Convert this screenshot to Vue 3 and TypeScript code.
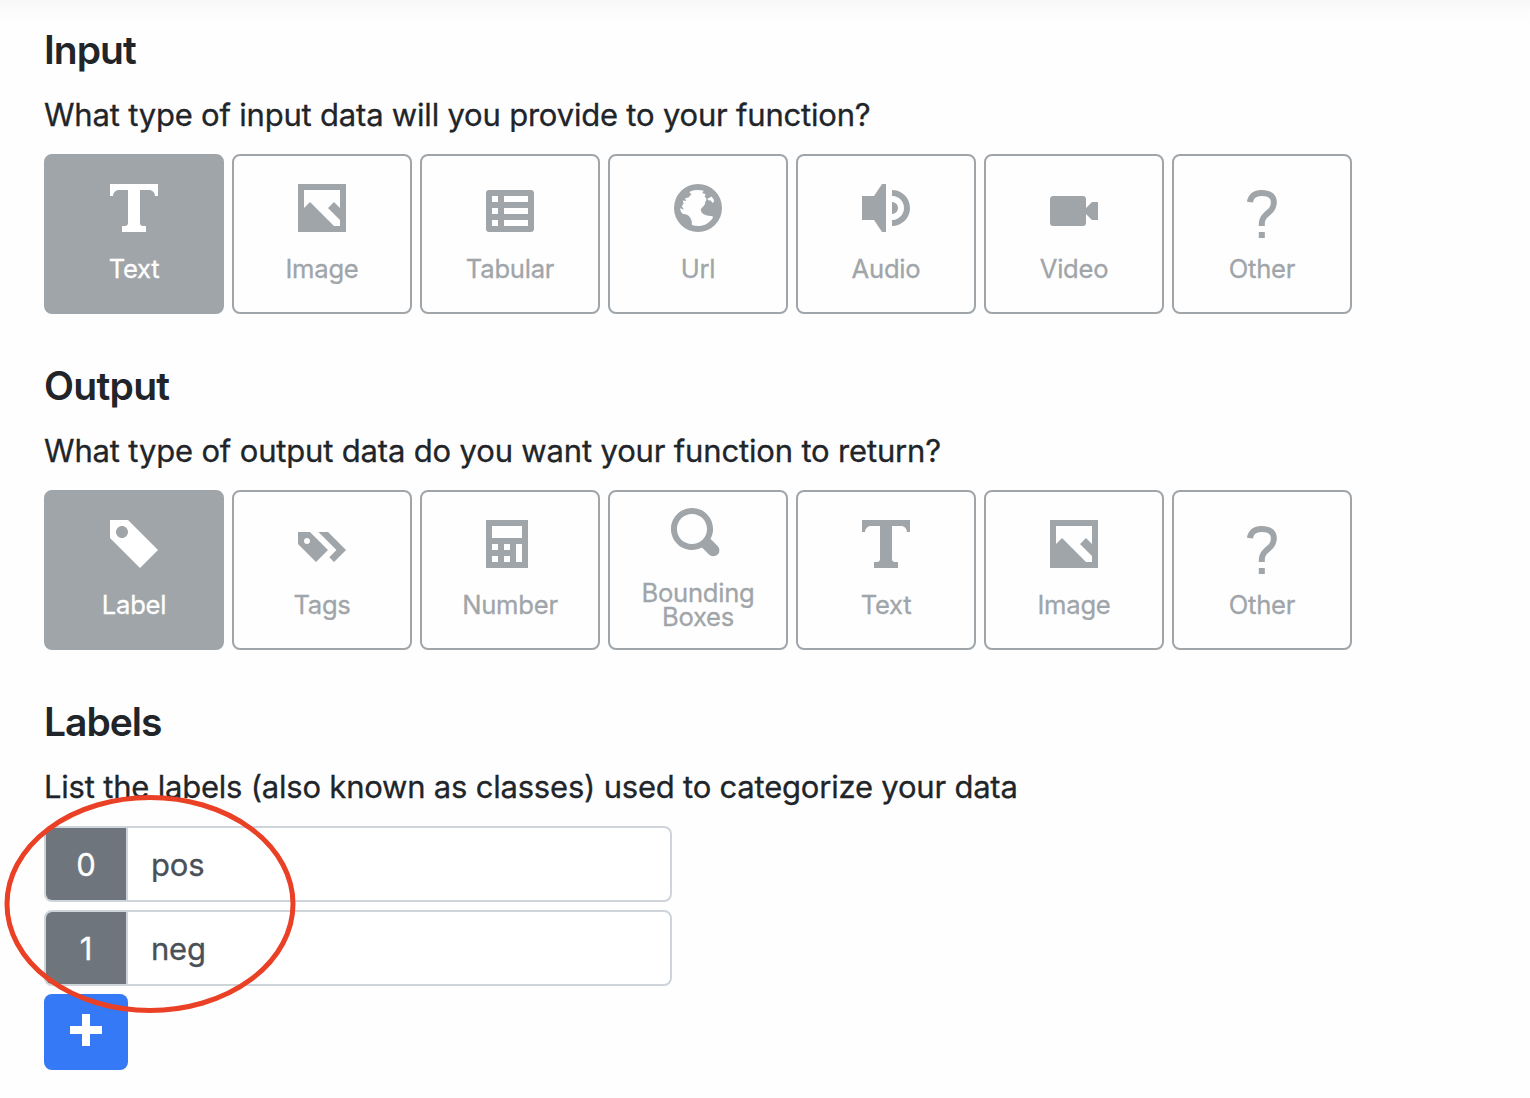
<script setup lang="ts">
interface Choice {
  label: string
  icon: string
  x?: number
  y?: number
}

const icons: Record<string, string> = {
  text: 'M0 0v2h.5c0-.55.45-1 1-1h1.5v5.5c0 .28-.22.5-.5.5h-.5v1h4v-1h-.5c-.28 0-.5-.22-.5-.5v-5.5h1.5c.55 0 1 .45 1 1h.5v-2h-8z',
  image: 'M0 0v8h8v-8h-8zm1 1h6v3l-1-1-1 1 2 2v1h-1l-4-4-1 1v-3z',
  table: 'M.5 1c-.28 0-.5.22-.5.5v6c0 .28.22.5.5.5h7c.28 0 .5-.22.5-.5v-6c0-.28-.22-.5-.5-.5h-7zm.5 1h1v1h-1v-1zm2 0h4v1h-4v-1zm-2 2h1v1h-1v-1zm2 0h4v1h-4v-1zm-2 2h1v1h-1v-1zm2 0h4v1h-4v-1z',
  globe: 'M4 0a4 4 0 1 0 0 8 4 4 0 0 0 0-8zM2.67 1.24Q3.3 1 4 1Q4.5 1 4.95 1.13L4.7 1.5L5.3 1.7L5.1 2.1L5.4 2.4Q5.45 2.75 5.2 3Q5.25 3.4 4.95 3.65C4.7 3.9 4.5 4.1 4.45 4.35C4.55 4.9 5 5.15 5.5 5.25L6.4 5.38Q6.6 5.5 6.4 5.75C5.8 6.6 5 7 4 7Q3.45 7 2.98 6.82Q3.05 6.1 2.75 5.7C2.4 5.1 2 5.05 1.5 5Q1.05 4.7 1 4.05L1.65 4.25L1.3 3.7L1.6 3.25L1.45 2.75Q1.8 2.85 2.05 2.75L1.8 2.4L2.5 2.2Q2.6 1.9 2.95 1.75L2.6 1.45ZM5.55 2.5L6.25 2.1Q6.6 2.45 6.7 2.85L6.45 3.15L6.1 2.75Q5.75 2.8 5.55 2.5Z',
  volume: 'M3.34 0l-1.34 2h-2v4h2l1.34 2h.66v-8h-.66zm1.66 1v1c.17 0 .34.02.5.06.86.22 1.5 1 1.5 1.94s-.63 1.72-1.5 1.94c-.16.04-.33.06-.5.06v1c.25 0 .48-.04.72-.09h.03c1.3-.33 2.25-1.51 2.25-2.91 0-1.4-.95-2.58-2.25-2.91-.23-.06-.49-.09-.75-.09zm0 2v2c.09 0 .18-.01.25-.03.43-.11.75-.51.75-.97 0-.46-.31-.86-.75-.97-.08-.02-.17-.03-.25-.03z',
  video: 'M.5 2c-.28 0-.5.23-.5.5v4c0 .28.22.5.5.5h5c.28 0 .5-.22.5-.5v-1.5l1 1h1v-3h-1l-1 1v-1.5c0-.28-.22-.5-.5-.5h-5z',
  question: 'M2.47 0c-.85 0-1.48.26-1.88.66-.4.4-.54.9-.59 1.28l1 .13c.04-.25.12-.5.31-.69s.49-.38 1.16-.38c.66 0 1.02.16 1.22.34.2.18.28.4.28.66 0 .83-.34 1.06-.84 1.5-.5.44-1.16 1.08-1.16 2.25v.25h1v-.25c0-.83.31-1.06.81-1.5.5-.44 1.19-1.08 1.19-2.25 0-.48-.17-1.02-.59-1.41-.43-.39-1.07-.59-1.91-.59zm-.5 7v1h1v-1h-1z',
  tag: 'M0 0v3l5 5 3-3-5-5h-3zm2 1c.55 0 1 .45 1 1s-.45 1-1 1-1-.45-1-1 .45-1 1-1z',
  tags: 'M0 2v2l3 3 1.5-1.5.5-.5-2-2-1-1h-2zm3.41 0l3 3-1.19 1.22.78.78 2-2-3-3h-1.59zm-1.91 1c.28 0 .5.22.5.5s-.22.5-.5.5-.5-.22-.5-.5.22-.5.5-.5z',
  calculator: 'M0 0v8h7v-8h-7zm1 1h5v2h-5v-2zm0 3h1v1h-1v-1zm2 0h1v1h-1v-1zm2 0h1v3h-1v-3zm-4 2h1v1h-1v-1zm2 0h1v1h-1v-1z',
  search: 'M3.5 0c-1.93 0-3.5 1.57-3.5 3.5s1.57 3.5 3.5 3.5c.59 0 1.17-.14 1.66-.41a1 1 0 0 0 .13.13l1 1a1.02 1.02 0 1 0 1.44-1.44l-1-1a1 1 0 0 0-.16-.13c.27-.49.44-1.06.44-1.66 0-1.93-1.55-3.5-3.5-3.5zm0 1c1.39 0 2.5 1.11 2.5 2.5 0 .66-.24 1.27-.66 1.72-.01.01-.02.02-.03.03a1 1 0 0 0-.13.13c-.44.4-1.04.63-1.69.63-1.39 0-2.5-1.11-2.5-2.5s1.11-2.5 2.5-2.5z',
}

const sections: { title: string; key: string; prompt: string; choices: Choice[] }[] = [
  {
    title: 'Input',
    key: 'input',
    prompt: 'What type of input data will you provide to your function?',
    choices: [
      { label: 'Text', icon: 'text' },
      { label: 'Image', icon: 'image' },
      { label: 'Tabular', icon: 'table' },
      { label: 'Url', icon: 'globe' },
      { label: 'Audio', icon: 'volume' },
      { label: 'Video', icon: 'video' },
      { label: 'Other', icon: 'question', x: 1.5, y: 1 },
    ],
  },
  {
    title: 'Output',
    key: 'output',
    prompt: 'What type of output data do you want your function to return?',
    choices: [
      { label: 'Label', icon: 'tag' },
      { label: 'Tags', icon: 'tags' },
      { label: 'Number', icon: 'calculator' },
      { label: 'Bounding Boxes', icon: 'search', x: -0.5 },
      { label: 'Text', icon: 'text' },
      { label: 'Image', icon: 'image' },
      { label: 'Other', icon: 'question', x: 1.5, y: 1 },
    ],
  },
]

const labels = ['pos', 'neg']
</script>

<template>
  <main class="page">
    <section v-for="s in sections" :key="s.key" class="section" :class="s.key">
      <h5>{{ s.title }}</h5>
      <p>{{ s.prompt }}</p>
      <div class="choices">
        <button v-for="(c, i) in s.choices" :key="c.label" class="choice" :class="{ active: i === 0 }">
          <svg class="icon" viewBox="0 0 8 8">
            <path fill-rule="evenodd" :d="icons[c.icon]" :transform="`translate(${c.x ?? 0} ${c.y ?? 0})`" />
          </svg>
          <span class="caption">{{ c.label }}</span>
        </button>
      </div>
    </section>

    <section class="section labels">
      <h5>Labels</h5>
      <p>List the labels (also known as classes) used to categorize your data</p>
      <div class="label-list">
        <div v-for="(name, i) in labels" :key="name" class="row">
          <span class="index">{{ i }}</span>
          <span class="value">{{ name }}</span>
        </div>
        <button class="add" aria-label="Add label">
          <svg viewBox="0 0 8 8"><path d="M3 0v3h-3v2h3v3h2v-3h3v-2h-3v-3z" /></svg>
        </button>
      </div>
      <svg class="annotation" viewBox="0 0 292 220">
        <ellipse cx="146" cy="110" rx="143" ry="106.5" />
      </svg>
    </section>
  </main>
</template>

<style>
body {
  margin: 0;
  background: #fefefe;
}
</style>

<style scoped>
.page {
  box-sizing: border-box;
  height: 1098px;
  padding: 26px 44px 0;
  overflow: hidden;
  background: linear-gradient(#f7f7f7, #fcfcfc 12px, #fefefe 24px);
  color: #212529;
  font-family: Inter, "Liberation Sans", sans-serif;
}
.section {
  position: relative;
  height: 336px;
}
h5 {
  margin: 0 0 17px;
  font-size: 39px;
  font-weight: 600;
  line-height: 48px;
  letter-spacing: -1px;
}
.output h5 {
  letter-spacing: -0.7px;
}
p {
  margin: 0 0 15px;
  font-size: 31px;
  line-height: 48px;
  letter-spacing: -0.2px;
  white-space: nowrap;
}
.output p {
  letter-spacing: -0.165px;
}
.labels p {
  letter-spacing: -0.21px;
}
p,
.caption,
.index,
.value {
  -webkit-text-stroke: 0.3px currentColor;
}
.choices {
  display: flex;
  gap: 8px;
}
.choice {
  box-sizing: border-box;
  display: flex;
  flex-direction: column;
  align-items: center;
  justify-content: center;
  width: 180px;
  height: 160px;
  padding: 0 20px 3px;
  border: 2px solid #a0a5a9;
  border-radius: 8px;
  background: transparent;
  color: #a0a5a9;
  font-family: inherit;
}
.choice.active {
  background: #a0a5a9;
  color: #fff;
}
.icon {
  display: block;
  flex: none;
  width: 48px;
  height: 48px;
  margin-bottom: 25px;
  overflow: visible;
  fill: currentColor;
}
.caption {
  font-size: 25.6px;
  line-height: 24px;
  letter-spacing: -0.25px;
}
.label-list {
  display: flex;
  flex-direction: column;
  align-items: flex-start;
  gap: 8px;
}
.row {
  box-sizing: border-box;
  display: flex;
  width: 628px;
  height: 76px;
  overflow: hidden;
  border: 2px solid #ced4da;
  border-radius: 8px;
  background: #fff;
  font-size: 31px;
  line-height: 74px;
  letter-spacing: -0.2px;
}
.index {
  width: 80px;
  border-right: 2px solid #ced4da;
  background: #6e757c;
  color: #fff;
  text-align: center;
}
.value {
  padding-left: 23px;
  color: #495057;
}
.add {
  display: flex;
  justify-content: center;
  width: 84px;
  height: 76px;
  padding: 20px 0 0;
  border: 0;
  border-radius: 8px;
  background: #3579f6;
}
.add svg {
  width: 32px;
  height: 32px;
  fill: #fff;
}
/* Highlight circling the first two labels */
.annotation {
  position: absolute;
  top: 95.5px;
  left: -40px;
  width: 292px;
  height: 220px;
  overflow: visible;
  fill: none;
  stroke: #ea4026;
  stroke-width: 5;
}
</style>
